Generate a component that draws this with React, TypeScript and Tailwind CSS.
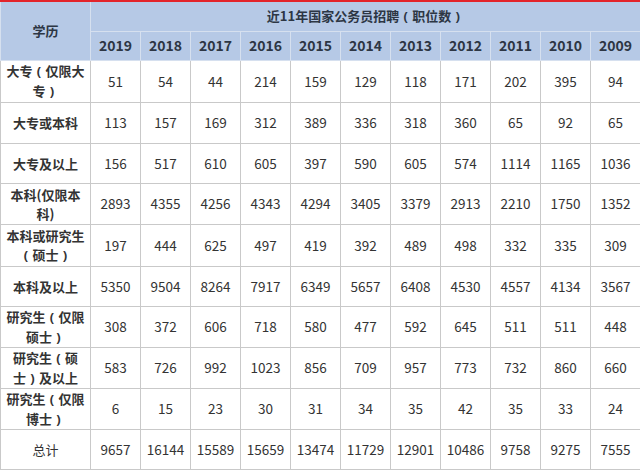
import React from "react";

const L = () => <span className="inline-block w-[13px] text-center" style={{ fontFamily: '"Noto Sans", sans-serif' }}>(</span>;
const R = () => <span className="inline-block w-[13px] text-center" style={{ fontFamily: '"Noto Sans", sans-serif' }}>)</span>;

const years = ["2019","2018","2017","2016","2015","2014","2013","2012","2011","2010","2009"];
const rows: { label: React.ReactNode; bold: boolean; h: string; v: number[] }[] = [
  { label: <>大专<L />仅限大<br/>专<R /></>, bold: true, h: "h-[42px]", v: [51,54,44,214,159,129,118,171,202,395,94] },
  { label: <>大专或本科</>, bold: true, h: "h-[41px]", v: [113,157,169,312,389,336,318,360,65,92,65] },
  { label: <>大专及以上</>, bold: true, h: "h-[40px]", v: [156,517,610,605,397,590,605,574,1114,1165,1036] },
  { label: <>本科(仅限本<br/>科)</>, bold: true, h: "h-[41px]", v: [2893,4355,4256,4343,4294,3405,3379,2913,2210,1750,1352] },
  { label: <>本科或研究生<br/><L />硕士<R /></>, bold: true, h: "h-[42px]", v: [197,444,625,497,419,392,489,498,332,335,309] },
  { label: <>本科及以上</>, bold: true, h: "h-[40px]", v: [5350,9504,8264,7917,6349,5657,6408,4530,4557,4134,3567] },
  { label: <>研究生<L />仅限<br/>硕士<R /></>, bold: true, h: "h-[41px]", v: [308,372,606,718,580,477,592,645,511,511,448] },
  { label: <>研究生<L />硕<br/>士<R />及以上</>, bold: true, h: "h-[41px]", v: [583,726,992,1023,856,709,957,773,732,860,660] },
  { label: <>研究生<L />仅限<br/>博士<R /></>, bold: true, h: "h-[41px]", v: [6,15,23,30,31,34,35,42,35,33,24] },
  { label: <>总计</>, bold: false, h: "h-[40px]", v: [9657,16144,15589,15659,13474,11729,12901,10486,9758,9275,7555] },
];

export default function App() {
  return (
    <div className="w-[640px] h-[471px] bg-white overflow-hidden" style={{ fontFamily: '"Noto Sans CJK SC", "Noto Sans", sans-serif' }}>
      <div className="h-[2px] bg-[#e3242b]" />
      <table className="table-fixed border-collapse w-[639px] text-[13px] text-[#333]">
        <colgroup>
          <col className="w-[90px]" />
          {years.map((y) => <col key={y} className="w-[50px]" />)}
        </colgroup>
        <thead>
          <tr className="h-[29px] bg-[#b6c9e6]">
            <th rowSpan={2} className="border border-[#d6e0ef] border-t-0 font-bold text-[#2d3644] text-center align-middle">学历</th>
            <th colSpan={11} className="border border-[#d6e0ef] border-t-0 font-bold text-[#2d3644] text-center">近11年国家公务员招聘<L />职位数<R /></th>
          </tr>
          <tr className="h-[29px] bg-[#b6c9e6]">
            {years.map((y) => (
              <th key={y} className="border border-[#d6e0ef] font-bold text-[14px] text-[#2d3644] text-center">{y}</th>
            ))}
          </tr>
        </thead>
        <tbody>
          {rows.map((r, i) => (
            <tr key={i} className={r.h}>
              <td className={`border border-[#c9c9c9] text-center leading-[19px] px-0 ${r.bold ? "font-bold" : "font-normal"}`}>{r.label}</td>
              {r.v.map((n, j) => (
                <td key={j} className="border border-[#c9c9c9] text-center text-[13.5px] px-0">{n}</td>
              ))}
            </tr>
          ))}
        </tbody>
      </table>
    </div>
  );
}
